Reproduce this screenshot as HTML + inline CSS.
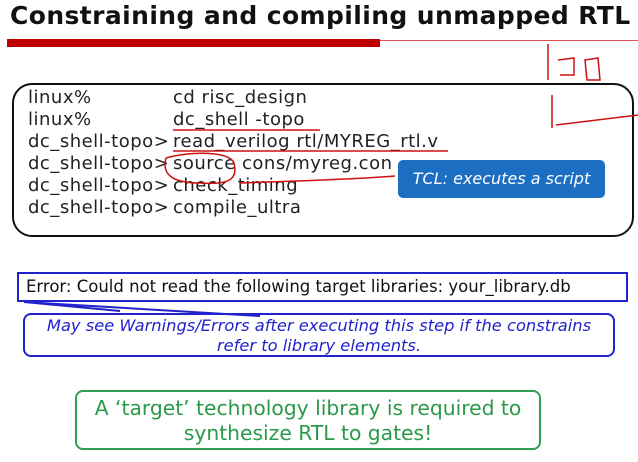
<!DOCTYPE html>
<html><head><style>
body{margin:0;width:638px;height:462px;background:#fff;position:relative;overflow:hidden;font-family:"DejaVu Sans","Liberation Sans",sans-serif}
.a{position:absolute}
.t{left:10px;top:1px;font-size:25px;font-weight:bold;color:#111;letter-spacing:0.4px}
.code{left:28px;top:87px;font-size:18px;line-height:22px;color:#222;font-family:"DejaVu Sans",sans-serif;letter-spacing:0.5px}
.code span{display:inline-block;width:145px}
</style></head><body>
<div class="a t">Constraining and compiling unmapped RTL</div>
<div class="a" style="left:7px;top:39px;width:373px;height:8px;background:#c00000"></div>
<div class="a" style="left:380px;top:40px;width:258px;height:1px;background:#e05050"></div>
<div class="a" style="left:12px;top:83px;width:618px;height:150px;border:2px solid #111;border-radius:20px"></div>
<div class="a code">
<div><span>linux%</span>cd risc_design</div>
<div><span>linux%</span>dc_shell -topo</div>
<div><span>dc_shell-topo&gt;</span>read_verilog rtl/MYREG_rtl.v</div>
<div><span>dc_shell-topo&gt;</span>source cons/myreg.con</div>
<div><span>dc_shell-topo&gt;</span>check_timing</div>
<div><span>dc_shell-topo&gt;</span>compile_ultra</div>
</div>
<svg class="a" style="left:0;top:0" width="638" height="462" fill="none" stroke="#d01010" stroke-width="1.5">
<path d="M173 130 L320 130"/><path d="M173 151 L448 151"/>
<path d="M166 158 C190 151 230 151 234 163 C238 179 230 185 200 183 C170 183 162 173 166 158"/>
<path d="M240 183 C300 181 360 179 395 176"/>
<path d="M548 44 L548 80 M558 60 L574 58 L574 75 L560 75 M585 60 L598 58 L600 80 L587 80 Z M552 95 L552 128 M556 125 L638 115"/>
</svg>
<div class="a" style="left:398px;top:160px;width:207px;height:38px;background:#1b6ec2;border-radius:5px;color:#fff;font-style:italic;font-size:16px;line-height:38px;text-align:center">TCL: executes a script</div>
<div class="a" style="left:17px;top:272px;width:600px;height:26px;border:2px solid #2222cc;font-size:16.5px;line-height:26px;padding-left:7px;box-sizing:content-box;color:#111">Error: Could not read the following target libraries: your_library.db</div>
<svg class="a" style="left:0;top:0" width="638" height="462" fill="none" stroke="#2222cc" stroke-width="2"><path d="M24 302 L120 311 M24 302 L260 316"/></svg>
<div class="a" style="left:23px;top:313px;width:592px;height:44px;border:2px solid #2222cc;border-radius:8px;color:#2222cc;font-style:italic;font-size:16.3px;line-height:20px;text-align:center;padding-top:1px;box-sizing:border-box">May see Warnings/Errors after executing this step if the constrains<br>refer to library elements.</div>
<div class="a" style="left:75px;top:390px;width:466px;height:60px;border:2px solid #30a050;border-radius:8px;color:#2a9a48;font-size:20.3px;line-height:25px;text-align:center;padding-top:4px;box-sizing:border-box">A ‘target’ technology library is required to<br>synthesize RTL to gates!</div>
</body></html>
